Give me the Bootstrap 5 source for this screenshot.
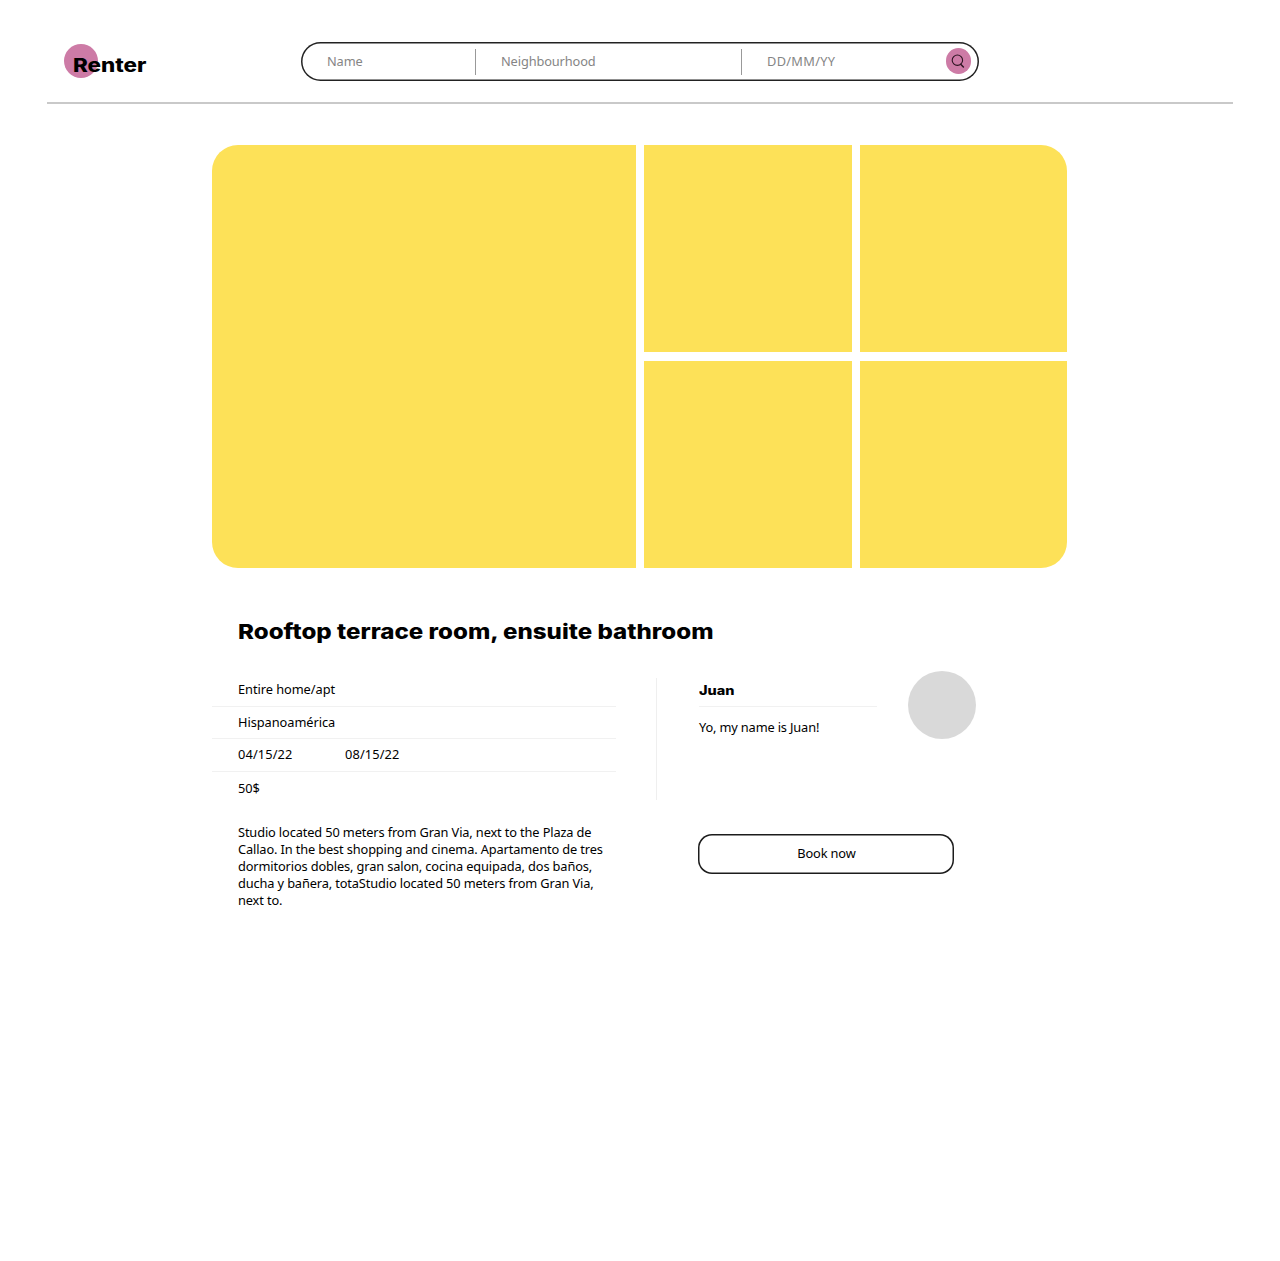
<!DOCTYPE html>
<html lang="en">
<head>
<meta charset="utf-8">
<meta name="viewport" content="width=device-width, initial-scale=1">
<title>Renter</title>
<link href="https://cdn.jsdelivr.net/npm/bootstrap@5.3.0/dist/css/bootstrap.min.css" rel="stylesheet">
<style>
  body { font: 400 12.8px/17px "Noto Sans", "Open Sans", sans-serif; letter-spacing: -.05px; color: #000; background: #fff; min-height: 1261px; }
  .site-header { margin: 0 47px; height: 104px; border-bottom: 2px solid #c9c9c9; padding: 42px 0 0 16.5px; }
  .brand { width: 237.5px; height: 39px; padding-top: 2px; }
  .brand-dot { width: 34px; height: 34px; border-radius: 50%; background: #cd7ba6; padding: 10px 0 0 9.5px; }
  .display-face { display: inline-block; font-family: Inter, "Liberation Sans", sans-serif; font-weight: 800; letter-spacing: 0; white-space: nowrap; transform-origin: 0 50%; }
  .brand-name { font-size: 18.6px; line-height: 22px; transform: scaleX(1.205); }
  .search-pill { width: 678px; height: 39px; border-radius: 20px; box-shadow: inset 0 0 0 1.5px #222; padding: 0 8px 0 0; }
  .search-pill input { border: 0; outline: 0; background: none; padding: 0 0 1px 26px; height: 26px; font: inherit; letter-spacing: -.12px; min-width: 0; border-radius: 0; }
  .search-pill input::placeholder { color: #858585; opacity: 1; }
  .f-name { width: 174px; }
  .f-area { width: 266px; border-left: 1px solid #999 !important; padding-left: 25px !important; }
  .f-date { width: 204px; border-left: 1px solid #999 !important; padding-left: 25px !important; letter-spacing: .3px !important; }
  .search-btn { width: 25.5px; height: 25.5px; background: #cd7ba6; border: 0; margin: 0 0 1px auto; }
  .page-body { width: 855px; margin: 41px 0 0 212.4px; }
  .gallery { display: grid; grid-template-columns: 423.5px 207.5px 207.5px; grid-template-rows: 207px 207px; gap: 9px 8.25px; border-radius: 26px; overflow: hidden; }
  .shot { background: #fde158; }
  .shot-main { grid-row: span 2; }
  .listing-title { margin: 50px 0 0 25.6px; font-size: 20.5px; line-height: 26px; }
  .listing-title span { transform: scaleX(1.176); }
  .info-area { margin-top: 29px; }
  .facts { width: 404px; }
  .fact { height: 32.5px; padding: 0 0 1px 25.6px; border-bottom: 1px solid #f1f1f1; }
  .fact-low { padding-bottom: 0; padding-top: 1px; }
  .fact-dates { letter-spacing: .14px; }
  .date-from { width: 107px; }
  .summary { width: 378px; margin: 20px 0 0 25.6px; letter-spacing: -.13px; }
  .divider { width: 1px; height: 122px; margin: 0 42px 0 39.6px; background: #efefef; }
  .host { width: 178px; }
  .host-name { height: 29px; padding-top: 4px; border-bottom: 1px solid #f1f1f1; font-size: 12.6px; line-height: 18px; }
  .host-name span { transform: scaleX(1.15); }
  .host-text { padding-top: 12px; letter-spacing: -.15px; }
  .avatar { width: 68px; height: 68px; margin: -7px 0 0 31px; background: #d9d9d9; }
  .book-btn { width: 256px; height: 40px; margin: 94.5px 0 0 -.5px; border-radius: 14px; box-shadow: inset 0 0 0 1.5px #1c1c1c; border: 0; background: #fff; color: #000; padding: 0; letter-spacing: -.14px; }
</style>
<script src="https://cdn.jsdelivr.net/npm/bootstrap@5.3.0/dist/js/bootstrap.bundle.min.js"></script>
</head>
<body>
<header class="site-header d-flex align-items-start">
  <div class="brand flex-shrink-0"><div class="brand-dot"><span class="display-face brand-name">Renter</span></div></div>
  <form class="search-pill d-flex align-items-center flex-shrink-0">
    <input class="f-name" type="text" placeholder="Name" aria-label="Name">
    <input class="f-area" type="text" placeholder="Neighbourhood" aria-label="Neighbourhood">
    <input class="f-date" type="text" placeholder="DD/MM/YY" aria-label="Date">
    <button class="search-btn rounded-circle p-0 d-flex align-items-center justify-content-center" type="button" aria-label="Search">
      <svg width="14" height="16" viewBox="0 0 14 16" fill="none" stroke="#2e1523" stroke-linecap="round"><circle cx="6.4" cy="7.2" r="5.2" stroke-width="1.1"/><path d="M9.7 11.2 12.4 14" stroke-width="1.5"/></svg>
    </button>
  </form>
</header>
<main class="page-body">
  <section class="gallery">
    <div class="shot shot-main"></div><div class="shot"></div><div class="shot"></div><div class="shot"></div><div class="shot"></div>
  </section>
  <h1 class="listing-title"><span class="display-face">Rooftop terrace room, ensuite bathroom</span></h1>
  <section class="info-area d-flex align-items-start">
    <div class="facts">
      <div class="fact d-flex align-items-center">Entire home/apt</div>
      <div class="fact fact-low d-flex align-items-center">Hispanoamérica</div>
      <div class="fact fact-dates d-flex align-items-center"><span class="date-from">04/15/22</span><span>08/15/22</span></div>
      <div class="fact fact-low border-0 d-flex align-items-center">50$</div>
      <p class="summary">Studio located 50 meters from Gran Via, next to the Plaza de<br>Callao. In the best shopping and cinema. Apartamento de tres<br>dormitorios dobles, gran salon, cocina equipada, dos baños,<br>ducha y bañera, totaStudio located 50 meters from Gran Via,<br>next to.</p>
    </div>
    <div class="divider mt-1"></div>
    <div>
      <div class="d-flex align-items-start mt-1">
        <div class="host">
          <div class="host-name"><span class="display-face">Juan</span></div>
          <div class="host-text">Yo, my name is Juan!</div>
        </div>
        <div class="avatar rounded-circle"></div>
      </div>
      <button class="book-btn" type="button">Book now</button>
    </div>
  </section>
</main>
</body>
</html>
